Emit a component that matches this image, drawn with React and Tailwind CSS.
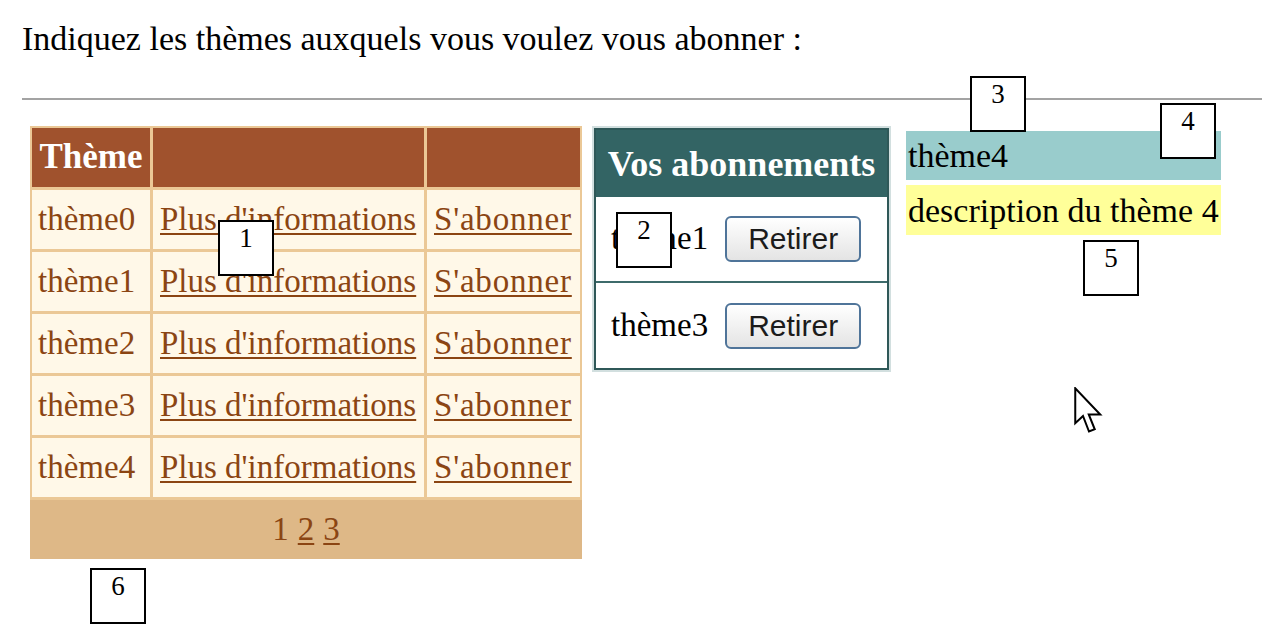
import React from "react";

const serif = "font-['Liberation_Serif','Times_New_Roman',serif]";

function NumBox({ n, x, y }) {
  return (
    <div
      className={`absolute w-[56px] h-[56px] border-2 border-black bg-white text-center text-[27px] leading-[30px] pt-[1px] text-black ${serif}`}
      style={{ left: x, top: y }}
    >
      {n}
    </div>
  );
}

const themes = ["thème0", "thème1", "thème2", "thème3", "thème4"];

function Cursor() {
  return (
    <svg
      className="absolute left-[1074px] top-[387px]"
      width="30"
      height="50"
      viewBox="0 0 12 20"
    >
      <path
        d="M0.5 0.5 L0.5 14.5 L3.6 11.6 L6 17.8 L8.3 16.9 L5.9 11 L10.5 11 Z"
        fill="white"
        stroke="black"
        strokeWidth="0.8"
        strokeLinejoin="miter"
      />
    </svg>
  );
}

function RetirerButton() {
  return (
    <button className="w-[136px] h-[46px] rounded-[6px] border-2 border-[#4f7499] bg-gradient-to-b from-[#ffffff] to-[#e4e4e4] text-[30px] leading-none text-[#1b1b1b] font-['Liberation_Sans',Arial,sans-serif]">
      Retirer
    </button>
  );
}

export default function App() {
  return (
    <div className={`relative w-[1279px] h-[641px] bg-white overflow-hidden ${serif}`}>
      <div className="pl-[22px] pr-[17px] pt-[20px]">
        <p className="text-[34px] leading-[38px] text-black">
          Indiquez les thèmes auxquels vous voulez vous abonner :
        </p>
        <hr className="mt-[40px] border-0 border-t-2 border-[#a3a3a3]" />
        <div className="flex items-start mt-[26px]">
          {/* Table 1 */}
          <div className="ml-[8px] grid grid-cols-[118px_271px_153px] gap-[3px] p-[2px] bg-[#ebc896] text-[33px] text-[#8b4513]">
            <div className="h-[59px] bg-[#a0522d] text-white font-bold text-[35px] flex items-center justify-center">
              Thème
            </div>
            <div className="h-[59px] bg-[#a0522d]"></div>
            <div className="h-[59px] bg-[#a0522d]"></div>
            {themes.map((t) => (
              <React.Fragment key={t}>
                <div className="h-[59px] bg-[#fff8e8] flex items-center pl-[6px]">{t}</div>
                <div className="h-[59px] bg-[#fff8e8] flex items-center pl-[7px]">
                  <span className="underline decoration-[2px] underline-offset-[3px]">
                    Plus d'informations
                  </span>
                </div>
                <div className="h-[59px] bg-[#fff8e8] flex items-center pl-[7px]">
                  <span className="underline decoration-[2px] underline-offset-[3px] tracking-[0.8px]">
                    S'abonner
                  </span>
                </div>
              </React.Fragment>
            ))}
            <div className="col-span-3 h-[59px] -mx-[2px] -mb-[2px] bg-[#deb887] flex items-center justify-center gap-[9px]">
              <span>1</span>
              <span className="underline decoration-[2px] underline-offset-[3px]">2</span>
              <span className="underline decoration-[2px] underline-offset-[3px]">3</span>
            </div>
          </div>

          {/* Table 2 */}
          <div className="ml-[10px] border-2 border-[#d2dfdf]">
            <div className="w-[295px] border-2 border-[#2f5858] bg-white">
              <div className="h-[67px] bg-[#336464] text-white font-bold text-[36px] flex items-center justify-center">
                Vos abonnements
              </div>
              <div className="h-[84px] flex items-center pl-[15px] gap-[17px] text-[33px] text-black">
                <span>thème1</span>
                <RetirerButton />
              </div>
              <div className="h-[2px] bg-[#3e6b6b]"></div>
              <div className="h-[85px] flex items-center pl-[15px] gap-[17px] text-[33px] text-black">
                <span>thème3</span>
                <RetirerButton />
              </div>
            </div>
          </div>

          {/* Right panel */}
          <div className="ml-[15px] mt-[5px] flex flex-col gap-[5px] text-[34px] text-black">
            <div className="h-[49px] bg-[#99cccc] pl-[2px] pr-[2px] flex items-center">thème4</div>
            <div className="h-[50px] bg-[#ffff99] pl-[2px] pr-[2px] flex items-center">
              description du thème 4
            </div>
          </div>
        </div>
      </div>

      <NumBox n="1" x={218} y={220} />
      <NumBox n="2" x={616} y={212} />
      <NumBox n="3" x={970} y={76} />
      <NumBox n="4" x={1160} y={103} />
      <NumBox n="5" x={1083} y={240} />
      <NumBox n="6" x={90} y={568} />
      <Cursor />
    </div>
  );
}
